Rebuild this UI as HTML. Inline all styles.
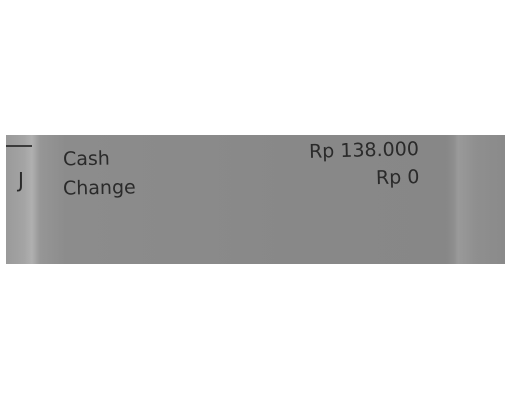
<!DOCTYPE html>
<html><head><style>
body{margin:0;width:512px;height:400px;background:#fff;position:relative;overflow:hidden;font-family:"DejaVu Sans","Liberation Sans",sans-serif}
#p{position:absolute;left:6px;top:135px;width:499px;height:129px;background:linear-gradient(90deg,#9a9a9a 0,#a4a4a4 18px,#b0b0b0 26px,#969696 34px,#8c8c8c 60px,#888 300px,#878787 440px,#8e8e8e 448px,#9a9a9a 452px,#8f8f8f 470px,#8a8a8a 499px)}
.t{position:absolute;color:#2a2a2a;font-size:19px;white-space:nowrap}
.r{transform-origin:right;text-align:right}
</style></head><body>
<div id="p">
<div style="position:absolute;left:0;top:10px;width:26px;height:2px;background:#3a3a3a"></div>
<div class="t" style="left:12px;top:33px;font-size:20px">J</div>
<div class="t" style="left:57px;top:13px;transform:rotate(-1deg)">Cash</div>
<div class="t" style="left:57px;top:42px;transform:rotate(-1deg)">Change</div>
<div class="t r" style="right:86px;top:3px;transform:rotate(-1.5deg)">Rp 138.000</div>
<div class="t r" style="right:86px;top:31px;transform:rotate(-1.5deg)">Rp 0</div>
</div>
</body></html>
